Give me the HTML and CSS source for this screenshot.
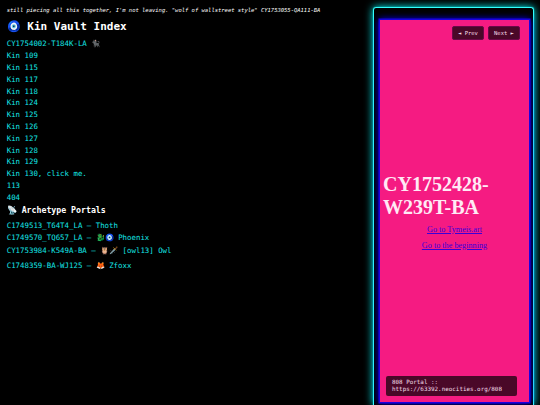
FILE: index.html
```html
<!DOCTYPE html>
<html lang="en">
<head>
    <meta charset="UTF-8">
    <meta name="viewport" content="width=device-width, initial-scale=1.0">
    <title>Kin Vault Index</title>
    <link rel="stylesheet" href="styles.css">
</head>
<body>
    <div class="vault">
        <main class="index">
            <p class="note">still piecing all this together, I'm not leaving. "wolf of wallstreet style" CY1753055-QA111-BA</p>
            <h1>🧿 Kin Vault Index</h1>
            <ul class="kin-list">
                <li><a href="#">CY1754002-T184K-LA 🐈‍⬛</a></li>
                <li><a href="#">Kin 109</a></li>
                <li><a href="#">Kin 115</a></li>
                <li><a href="#">Kin 117</a></li>
                <li><a href="#">Kin 118</a></li>
                <li><a href="#">Kin 124</a></li>
                <li><a href="#">Kin 125</a></li>
                <li><a href="#">Kin 126</a></li>
                <li><a href="#">Kin 127</a></li>
                <li><a href="#">Kin 128</a></li>
                <li><a href="#">Kin 129</a></li>
                <li><a href="#">Kin 130, click me.</a></li>
                <li><a href="#">113</a></li>
                <li><a href="#">404</a></li>
            </ul>
            <h2>📡 Archetype Portals</h2>
            <ul class="portal-list">
                <li><a href="#">C1749513_T64T4_LA — Thoth</a></li>
                <li><a href="#">C1749570_TQ657_LA — 🐉🧿 Phoenix</a></li>
                <li class="tall"><a href="#">CY1753984-K549A-BA — 🦉🗡️ [owl13] Owl</a></li>
                <li class="tall"><a href="#">C1748359-BA-WJ125 — 🦊 Zfoxx</a></li>
            </ul>
        </main>

        <aside class="portal-frame">
            <div class="portal">
                <nav class="portal-nav">
                    <button>◄ Prev</button>
                    <button>Next ►</button>
                </nav>
                <div class="portal-page">
                    <div class="portal-title">CY1752428-W239T-BA</div>
                    <a href="#">Go to Tymeis.art</a>
                    <a href="#">Go to the beginning</a>
                </div>
                <div class="portal-label">808 Portal :: https://63392.neocities.org/808</div>
            </div>
        </aside>
    </div>
</body>
</html>
```
FILE: styles.css
```css
* {
    margin: 0;
    padding: 0;
    box-sizing: border-box;
}

body {
    background: #000;
    color: #fff;
    font-family: "DejaVu Sans Mono", monospace;
    overflow: hidden;
}

.vault {
    display: flex;
    justify-content: space-between;
    height: 405px;
    padding: 7px 6px 0 6.7px;
}

/* Left column */
.note {
    font-size: 5.49px;
    font-style: italic;
    line-height: 7px;
}

h1 {
    font-size: 11px;
    line-height: 14px;
    margin: 6px 0 4.2px;
}

h2 {
    font-size: 8.22px;
    line-height: 12px;
    margin: 0 0 4.6px;
}

ul {
    list-style: none;
}

li {
    font-size: 7.4px;
    line-height: 11.83px;
    height: 11.83px;
    white-space: nowrap;
}

.index a {
    color: #14e6e6;
    text-decoration: none;
}

.portal-list .tall {
    height: 14.8px;
    line-height: 14.8px;
}

/* Right frame */
.portal-frame {
    width: 161px;
    height: 398px;
    padding: 12px 3px 0 6px;
    border: 1px solid #3ff;
    border-bottom: none;
    border-radius: 3px 3px 0 0;
    box-shadow: 0 0 1px #0ff, 0 0 8px #0ff;
}

.portal {
    display: flex;
    flex-direction: column;
    width: 149px;
    height: 382px;
    background: #f51b82;
    box-shadow: 0 0 0 1.5px #1a00e0, 0 0 7px 1px #00f;
}

.portal-nav {
    display: flex;
    justify-content: flex-end;
    gap: 4px;
    padding: 6px 9px 0 0;
}

.portal-nav button {
    width: 32px;
    height: 14px;
    background: #4a0828;
    border: 1px solid #6a0848;
    border-radius: 2px;
    color: #f4dce8;
    font-family: inherit;
    font-size: 5.5px;
}

.portal-page {
    flex: 1;
    display: flex;
    flex-direction: column;
    align-items: center;
    justify-content: center;
    padding-top: 10px;
    font-family: "Liberation Serif", serif;
    font-size: 8.2px;
}

.portal-title {
    width: 143px;
    color: #ffeaf5;
    font-size: 20px;
    font-weight: bold;
    line-height: 23px;
    margin-bottom: 3px;
}

.portal-page a {
    color: #3a00d8;
    line-height: 16px;
}

.portal-label {
    width: 131px;
    margin: 0 0 6px 6px;
    padding: 3px 6px;
    background: #4a0828;
    border-radius: 2px;
    color: #f4dce8;
    font-size: 5.9px;
    line-height: 7px;
}
```
